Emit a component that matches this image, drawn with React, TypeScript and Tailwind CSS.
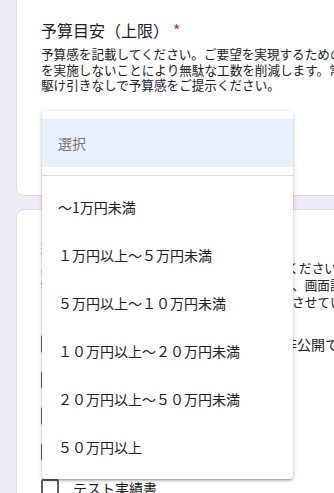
const font = { fontFamily: '"Noto Sans CJK JP", "Noto Sans", sans-serif' };

const options = [
  '～1万円未満',
  '１万円以上～５万円未満',
  '５万円以上～１０万円未満',
  '１０万円以上～２０万円未満',
  '２０万円以上～５０万円未満',
  '５０万円以上',
];

const docs = [
  '要件定義書（社内レビュー用のみ非公開で可）',
  '基本設計書',
  '詳細設計書',
  'テスト仕様書',
  'テスト実績書',
];

function Checkbox() {
  return <div className="h-[18px] w-[18px] flex-none rounded-[2px] border-2 border-[#5f6368]" />;
}

export default function App() {
  return (
    <div className="relative h-[493px] w-full overflow-hidden bg-[#f0ebf8] px-4" style={font}>
      <div className="-mt-2 w-[640px] rounded-lg border border-[#dadce0] bg-white px-6 pt-[25px] pb-[28px]">
        <div className="flex text-base leading-6 text-[#202124]">
          <span>予算目安（上限）</span>
          <span className="ml-1 text-[#d93025]">*</span>
        </div>
        <div className="mt-1 whitespace-nowrap text-[12.6px] leading-[15.5px] text-[#202124]">
          <div>予算感を記載してください。ご要望を実現するための最低限の作業を見極め、不要な作業</div>
          <div>を実施しないことにより無駄な工数を削減します。常に適正価格でご提供しますので、</div>
          <div>駆け引きなしで予算感をご提示ください。</div>
        </div>
        <div className="mt-[26px] h-12 w-[250px]" />
      </div>

      <div className="mt-[13px] w-[640px] rounded-t-lg border border-[#dadce0] bg-white px-6 pt-[25px] pb-6">
        <div className="text-base leading-6 text-[#202124]">納品ドキュメント</div>
        <div className="whitespace-nowrap text-[12.6px] leading-[17px] text-[#202124]">
          <div>必要な納品ドキュメントを1つ以上選択してください。</div>
          <div>特になければ、選択は最小限にしてください、画面設計書などは必要に応じて作成します。</div>
          <div>ドキュメントの内容により、別途お見積りとさせていただきます。</div>
        </div>
        <div className="mt-4 flex flex-col">
          {docs.map((d) => (
            <div key={d} className="flex h-9 items-center gap-3.5">
              <Checkbox />
              <span className="whitespace-nowrap text-sm leading-5 text-[#202124]">{d}</span>
            </div>
          ))}
        </div>
      </div>

      <div className="absolute top-[111px] left-[42px] w-[251px] rounded bg-white py-2 shadow-[0_2px_2px_0_rgba(0,0,0,0.14),0_3px_1px_-2px_rgba(0,0,0,0.12),0_1px_5px_0_rgba(0,0,0,0.2)]">
        <div className="flex h-12 items-center bg-[#e8f0fe] px-4 text-sm text-[#757575]">選択</div>
        <div className="mt-2 mb-[7px] h-px bg-[#dadce0]" />
        {options.map((o) => (
          <div key={o} className="flex h-12 items-center px-4 text-sm text-[#202124]">
            {o}
          </div>
        ))}
      </div>
    </div>
  );
}
